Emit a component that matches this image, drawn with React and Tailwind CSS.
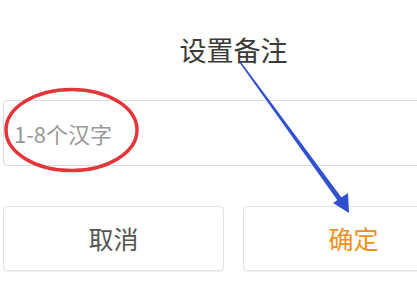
import React from "react";

const cjk = { fontFamily: '"Noto Sans CJK SC", "Noto Sans", sans-serif' };

export default function App() {
  return (
    <div className="relative w-[417px] h-[291px] overflow-hidden bg-white" style={cjk}>
      <div className="ml-[3px] w-[461px] flex flex-col">
        <div className="mt-[35px] h-[30px] text-center text-[27px] leading-[30px] text-[#3a3a3a]">设置备注</div>
        <input
          className="mt-[35px] h-[66px] w-full rounded-[4px] border border-[#dcdcdc] px-[10px] text-[22px] text-[#333] outline-none placeholder:text-[#999]"
          placeholder="1-8个汉字"
        />
        <div className="mt-[40px] flex gap-[19px]">
          <button className="flex-1 h-[65px] rounded-[4px] border border-[#e2e2e2] bg-white text-[25px] text-[#555] shadow-[0_1px_1px_rgba(0,0,0,0.06)]">取消</button>
          <button className="flex-1 h-[65px] rounded-[4px] border border-[#e2e2e2] bg-white text-[25px] text-[#ef8f1c] shadow-[0_1px_1px_rgba(0,0,0,0.06)]">确定</button>
        </div>
      </div>

      {/* annotations */}
      <svg className="absolute inset-0 pointer-events-none" width="417" height="291" viewBox="0 0 417 291">
        <ellipse cx="71.5" cy="130" rx="65.5" ry="40.5" fill="none" stroke="#e5353a" strokeWidth="3.5" />
        <polygon points="240.6,61.6 343,199.5 339,202.5 239.4,62.4" fill="#3050d0" />
        <polygon points="349,213 333,203 348,193" fill="#3050d0" />
      </svg>
    </div>
  );
}
